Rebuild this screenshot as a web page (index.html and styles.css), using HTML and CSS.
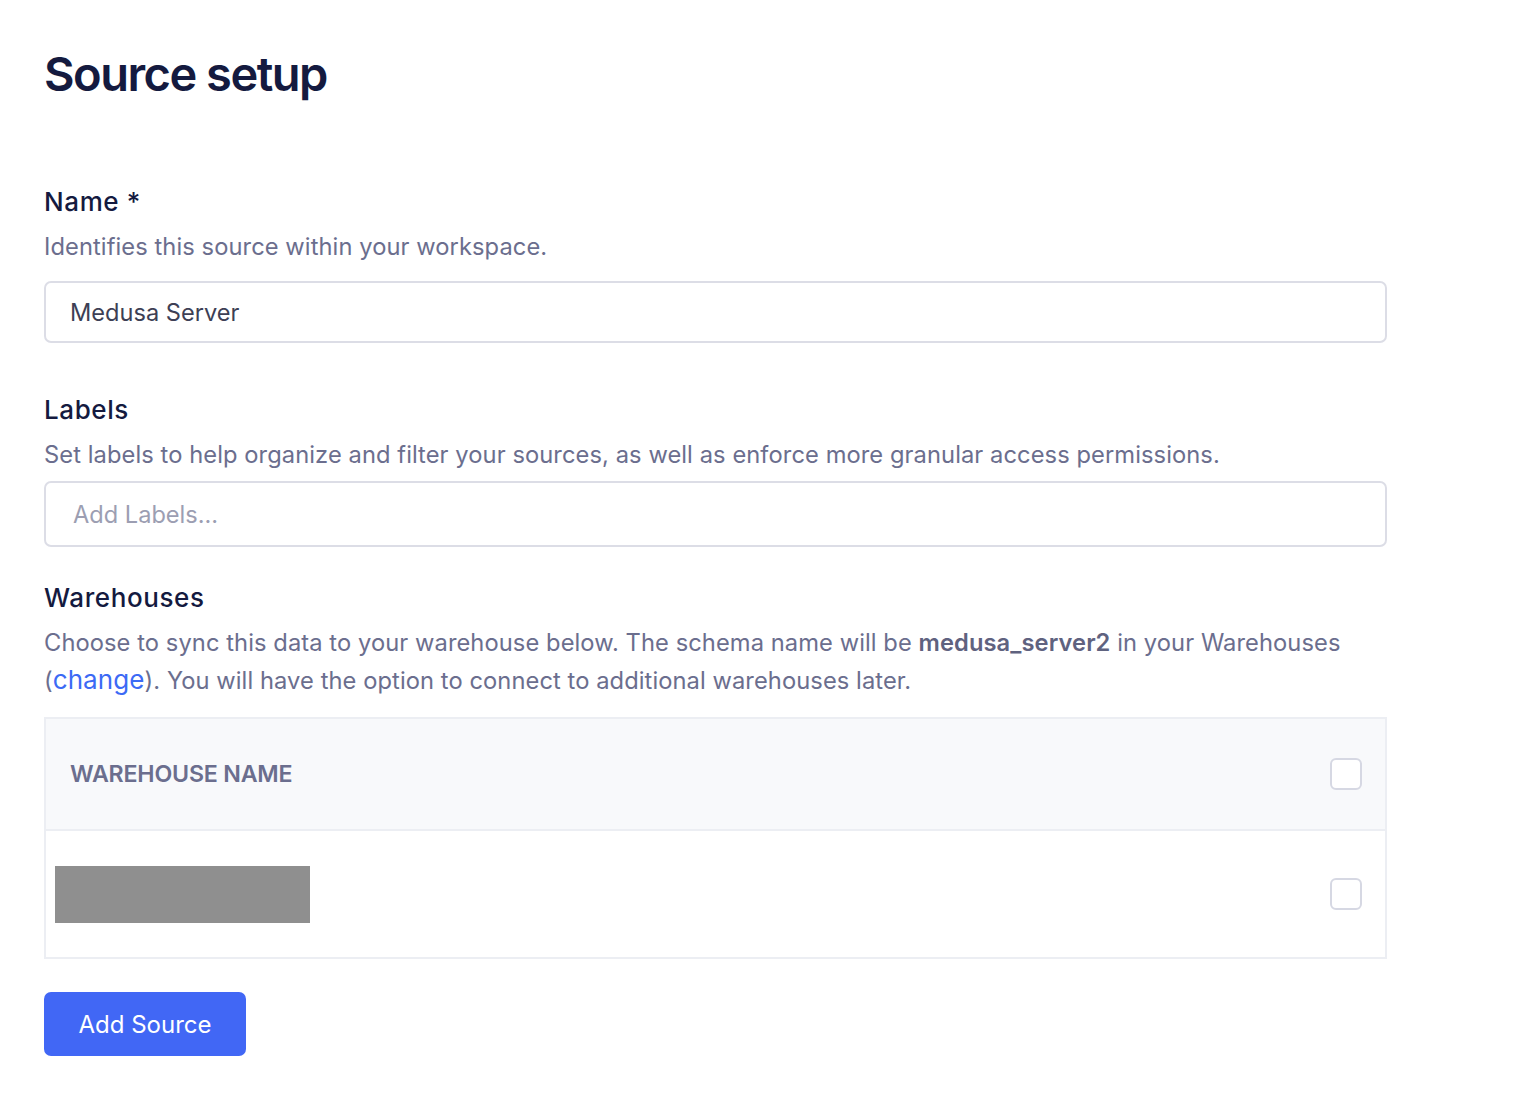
FILE: index.html
```html
<!DOCTYPE html>
<html lang="en">
<head>
    <meta charset="UTF-8">
    <meta name="viewport" content="width=device-width, initial-scale=1.0">
    <title>Source setup</title>
    <link rel="stylesheet" href="styles.css">
</head>
<body>
    <div class="page">
        <h1 class="title">Source setup</h1>

        <div class="field">
            <div class="label">Name *</div>
            <div class="hint">Identifies this source within your workspace.</div>
            <input class="input" type="text" value="Medusa Server">
        </div>

        <div class="field field-labels">
            <div class="label">Labels</div>
            <div class="hint">Set labels to help organize and filter your sources, as well as enforce more granular access permissions.</div>
            <input class="input input-tall" type="text" placeholder="Add Labels...">
        </div>

        <div class="field field-warehouses">
            <div class="label">Warehouses</div>
            <div class="hint">Choose to sync this data to your warehouse below. The schema name will be <strong>medusa_server2</strong> in your Warehouses (<a href="#" class="link">change</a>). You will have the option to connect to additional warehouses later.</div>

            <div class="table">
                <div class="row row-head">
                    <span class="col-name">WAREHOUSE NAME</span>
                    <span class="check"></span>
                </div>
                <div class="row row-body">
                    <span class="redacted"></span>
                    <span class="check"></span>
                </div>
            </div>
        </div>

        <button class="button">Add Source</button>
    </div>
</body>
</html>
```

FILE: styles.css
```css
body {
    margin: 0;
    font-family: Inter, "Noto Sans", sans-serif;
    background-color: #ffffff;
    color: #141a3f;
}

.page {
    width: 1343px;
    padding: 44px 0 0 44px;
}

.title {
    margin: 0 0 81px;
    font-size: 47px;
    font-weight: 600;
    letter-spacing: -1.5px;
    line-height: 60px;
    color: #141a3f;
}

.field {
    margin-bottom: 50px;
}

.field-labels {
    margin-bottom: 34px;
}

.field-warehouses {
    margin-bottom: 33px;
}

.label {
    font-size: 26px;
    font-weight: 500;
    letter-spacing: 0.6px;
    line-height: 34px;
    color: #141a3f;
}

.hint {
    margin-top: 9px;
    font-size: 23.7px;
    letter-spacing: 0.08px;
    line-height: 38px;
    color: #6b6e8e;
}

.hint strong {
    font-weight: 600;
    color: #5f627f;
}

.link {
    color: #3c6af5;
    font-size: 26px;
    line-height: 1;
    text-decoration: none;
}

.input {
    display: block;
    box-sizing: border-box;
    width: 100%;
    height: 62px;
    margin-top: 15px;
    padding: 0 24px;
    border: 2px solid #dcdde6;
    border-radius: 7px;
    font-family: inherit;
    font-size: 23.6px;
    color: #3d3f55;
    outline: none;
}

.input-tall {
    height: 66px;
    margin-top: 7px;
    padding-left: 27px;
}

.input::placeholder {
    color: #9c9eb2;
}

.table {
    margin-top: 17px;
    border: 2px solid #eceef3;
}

.row {
    display: flex;
    align-items: center;
    justify-content: space-between;
    padding: 0 23px 0 24px;
}

.row-head {
    height: 110px;
    background-color: #f8f9fb;
    border-bottom: 2px solid #eceef3;
}

.row-body {
    height: 126px;
    padding-left: 9px;
}

.col-name {
    font-size: 23.2px;
    font-weight: 600;
    letter-spacing: -0.2px;
    color: #6b6e8e;
}

.check {
    box-sizing: border-box;
    width: 32px;
    height: 32px;
    border: 2px solid #d6d8e3;
    border-radius: 6px;
    background-color: #ffffff;
}

.redacted {
    width: 255px;
    height: 57px;
    background-color: #8f8f8f;
}

.button {
    display: block;
    width: 202px;
    height: 64px;
    border: none;
    border-radius: 7px;
    background-color: #4167f5;
    color: #ffffff;
    font-family: inherit;
    font-size: 24px;
    font-weight: 400;
    cursor: pointer;
}
```
